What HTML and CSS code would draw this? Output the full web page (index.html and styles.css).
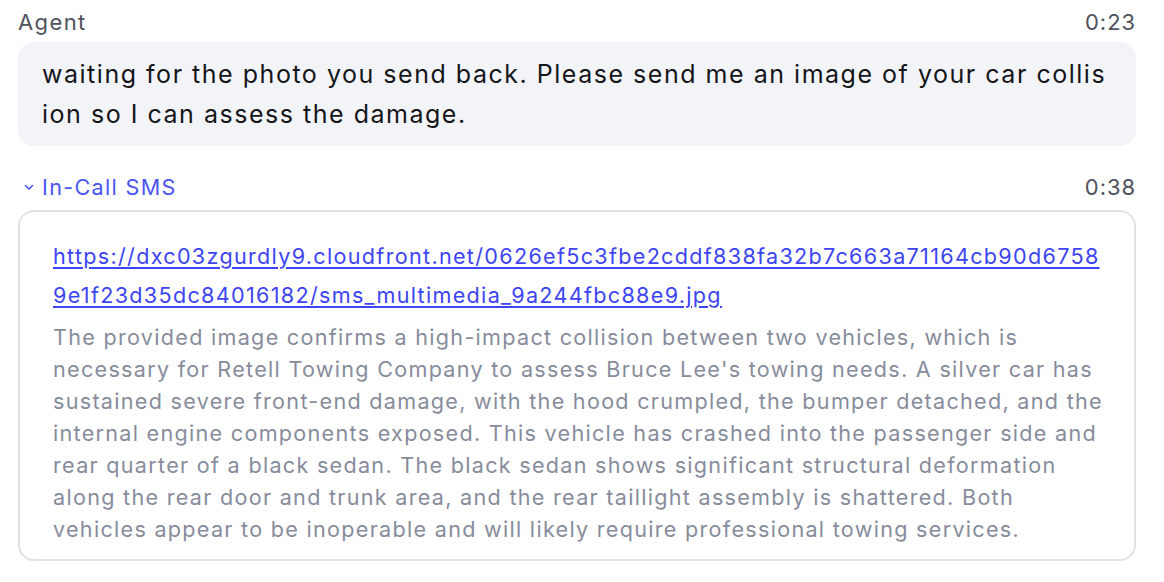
FILE: index.html
```html
<!DOCTYPE html>
<html>
<head>
<meta charset="utf-8">
<link rel="stylesheet" href="styles.css">
</head>
<body>
<div class="transcript">
  <div class="row-head">
    <span class="speaker">Agent</span>
    <span class="time">0:23</span>
  </div>
  <div class="bubble">waiting for the photo you send back. Please send me an image of your car collision so I can assess the damage.</div>

  <div class="row-head sms-head">
    <span class="sms-toggle">
      <svg class="chev" width="12" height="12" viewBox="0 0 12 12"><polyline points="2.5,4.5 6,8 9.5,4.5" fill="none" stroke="currentColor" stroke-width="1.6" stroke-linecap="round" stroke-linejoin="round"/></svg>
      <span>In-Call SMS</span>
    </span>
    <span class="time">0:38</span>
  </div>
  <div class="card">
    <a class="link" href="#">https://dxc03zgurdly9.cloudfront.net/0626ef5c3fbe2cddf838fa32b7c663a71164cb90d67589e1f23d35dc84016182/sms_multimedia_9a244fbc88e9.jpg</a>
    <p class="desc">The provided image confirms a high-impact collision between two vehicles, which is necessary for Retell Towing Company to assess Bruce Lee's towing needs. A silver car has sustained severe front-end damage, with the hood crumpled, the bumper detached, and the internal engine components exposed. This vehicle has crashed into the passenger side and rear quarter of a black sedan. The black sedan shows significant structural deformation along the rear door and trunk area, and the rear taillight assembly is shattered. Both vehicles appear to be inoperable and will likely require professional towing services.</p>
  </div>
</div>
</body>
</html>
```

FILE: styles.css
```css
* { box-sizing: border-box; }
html, body { margin: 0; padding: 0; background: #ffffff; }
body {
  font-family: Inter, "Noto Sans", sans-serif;
  color: #111318;
  letter-spacing: 0.058em;
}
.transcript {
  width: 1164px;
  padding: 8px 28px 0 18px;
  display: flex;
  flex-direction: column;
}
.row-head {
  display: flex;
  justify-content: space-between;
  align-items: center;
  height: 28px;
}
.speaker {
  font-size: 22px;
  color: #50525c;
  letter-spacing: 1.4px;
}
.time {
  font-size: 22px;
  color: #50525c;
}
.bubble {
  margin-top: 6px;
  background: #f3f4f8;
  border-radius: 16px;
  padding: 12px 24px;
  font-size: 25px;
  line-height: 40px;
  color: #15161a;
  letter-spacing: 1.52px;
  word-break: break-all;
}
.sms-head {
  margin-top: 27px;
}
.sms-toggle {
  display: flex;
  align-items: center;
  gap: 7px;
  color: #4a55f0;
  font-size: 21.6px;
  letter-spacing: 1.33px;
  padding-left: 5px;
}
.chev { display: block; }
.card {
  margin-top: 9px;
  border: 2px solid #e2e2e4;
  border-radius: 16px;
  padding: 25px 30px 14px 33px;
}
.link {
  display: block;
  color: #3d44f2;
  text-decoration: underline;
  text-underline-offset: 3px;
  font-size: 21.6px;
  line-height: 39px;
  letter-spacing: 1.3px;
  word-break: break-all;
}
.desc {
  margin: 6px 0 0;
  font-size: 21.6px;
  line-height: 32px;
  letter-spacing: 1.28px;
  color: #878c9c;
}
```
